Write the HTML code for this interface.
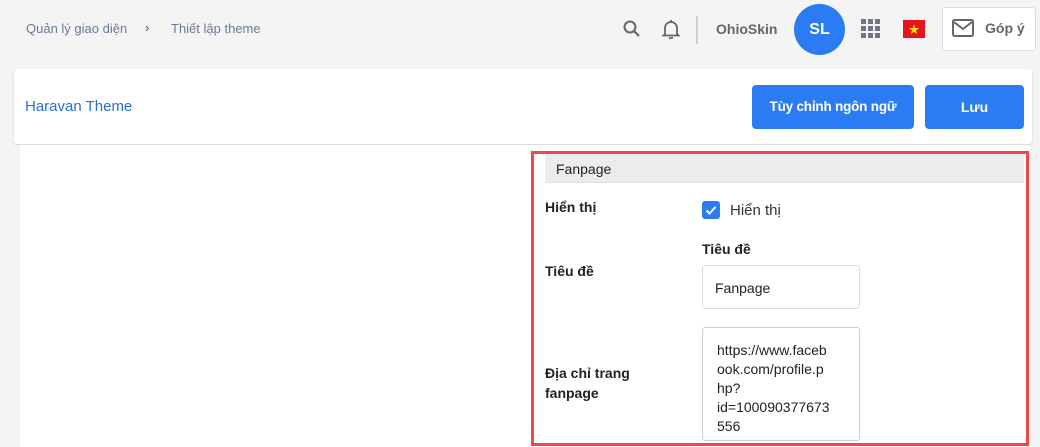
<!DOCTYPE html>
<html><head><meta charset="utf-8"><style>
*{margin:0;padding:0;box-sizing:border-box}
body{width:1040px;height:447px;overflow:hidden;background:#f4f4f4;font-family:"Liberation Sans",Roboto,sans-serif;position:relative}
.a{position:absolute}
</style></head><body>
<div class="a" style="left:26px;top:21px;font-size:13px;color:#6b7a99">Quản lý giao diện</div>
<div class="a" style="left:145px;top:20px;font-size:13px;color:#555">›</div>
<div class="a" style="left:171px;top:21px;font-size:13px;color:#6b7a99">Thiết lập theme</div>
<svg class="a" style="left:622px;top:19px" width="20" height="20" viewBox="0 0 20 20"><circle cx="8" cy="8" r="5.5" fill="none" stroke="#666" stroke-width="2"/><path d="M12 12l5 5" stroke="#666" stroke-width="2.2"/></svg>
<svg class="a" style="left:661px;top:18px" width="20" height="22" viewBox="0 0 20 22"><path d="M4 16V10a6 6 0 0 1 12 0v6l1.5 1.5h-15z" fill="none" stroke="#666" stroke-width="1.8"/><path d="M10 2v2M8 20h4" stroke="#666" stroke-width="1.8"/></svg>
<div class="a" style="left:696px;top:16px;width:2px;height:28px;background:#d0d0d0"></div>
<div class="a" style="left:716px;top:21px;font-size:14px;font-weight:bold;color:#666">OhioSkin</div>
<div class="a" style="left:794px;top:4px;width:51px;height:51px;border-radius:50%;background:#2b7bf3;color:#fff;font-weight:bold;font-size:16px;text-align:center;line-height:51px">SL</div>
<svg class="a" style="left:861px;top:19px" width="20" height="20"><g fill="#6e7687"><rect x="0" y="0" width="5" height="5"/><rect x="7" y="0" width="5" height="5"/><rect x="14" y="0" width="5" height="5"/><rect x="0" y="7" width="5" height="5"/><rect x="7" y="7" width="5" height="5"/><rect x="14" y="7" width="5" height="5"/><rect x="0" y="14" width="5" height="5"/><rect x="7" y="14" width="5" height="5"/><rect x="14" y="14" width="5" height="5"/></g></svg>
<svg class="a" style="left:903px;top:20px" width="22" height="18"><rect width="22" height="18" fill="#e8141c"/><polygon points="11,4 12.3,8 16.3,8 13,10.4 14.2,14.3 11,11.9 7.8,14.3 9,10.4 5.7,8 9.7,8" fill="#ffe000"/></svg>
<div class="a" style="left:942px;top:7px;width:94px;height:44px;background:#fff;border:1px solid #ddd;border-radius:3px"></div>
<svg class="a" style="left:952px;top:19px" width="22" height="18"><rect x="1" y="1" width="20" height="16" rx="1.5" fill="none" stroke="#666" stroke-width="2"/><path d="M2 3l9 7 9-7" fill="none" stroke="#666" stroke-width="2"/></svg>
<div class="a" style="left:985px;top:20px;font-size:14px;font-weight:bold;color:#666">Góp ý</div>
<div class="a" style="left:14px;top:69px;width:1018px;height:75px;background:#fff;border-radius:3px;box-shadow:0 1px 2px rgba(0,0,0,.15)"></div>
<div class="a" style="left:25px;top:98px;font-size:15px;color:#2b6fd6">Haravan Theme</div>
<div class="a" style="left:752px;top:85px;width:162px;height:44px;background:#2b7bf3;border-radius:4px;color:#fff;font-weight:bold;font-size:13.5px;letter-spacing:-0.2px;text-align:center;line-height:44px;white-space:nowrap">Tùy chỉnh ngôn ngữ</div>
<div class="a" style="left:925px;top:85px;width:99px;height:44px;background:#2b7bf3;border-radius:4px;color:#fff;font-weight:bold;font-size:14px;text-align:center;line-height:44px">Lưu</div>
<div class="a" style="left:20px;top:145px;width:1010px;height:302px;background:#fff"></div>
<div class="a" style="left:545px;top:152px;width:479px;height:31px;background:#ececec;border-bottom:1px solid #e0e0e0"></div>
<div class="a" style="left:556px;top:161px;font-size:14px;color:#222">Fanpage</div>
<div class="a" style="left:545px;top:199px;font-size:14px;font-weight:bold;color:#222">Hiển thị</div>
<div class="a" style="left:702px;top:201px;width:18px;height:18px;background:#2b7bf3;border-radius:3px"></div>
<svg class="a" style="left:702px;top:201px" width="18" height="18"><path d="M4.5 9.5l3 3 6-6.5" fill="none" stroke="#fff" stroke-width="2"/></svg>
<div class="a" style="left:730px;top:202px;font-size:15px;color:#333">Hiển thị</div>
<div class="a" style="left:702px;top:241px;font-size:14px;font-weight:bold;color:#222">Tiêu đề</div>
<div class="a" style="left:545px;top:263px;font-size:14px;font-weight:bold;color:#222">Tiêu đề</div>
<div class="a" style="left:702px;top:265px;width:158px;height:44px;border:1px solid #ddd;border-radius:3px;font-size:14px;color:#222;padding:14px 0 0 12px">Fanpage</div>
<div class="a" style="left:545px;top:363px;font-size:14px;font-weight:bold;color:#222;line-height:20px">Địa chỉ trang<br>fanpage</div>
<div class="a" style="left:702px;top:327px;width:158px;height:114px;border:1px solid #ccc;border-radius:3px;font-size:14px;color:#222;padding:13px 0 0 14px;line-height:19px">https://www.faceb<br>ook.com/profile.p<br>hp?<br>id=100090377673<br>556</div>
<div class="a" style="left:531px;top:151px;width:498px;height:295px;border:3px solid #f04848"></div>
</body></html>
